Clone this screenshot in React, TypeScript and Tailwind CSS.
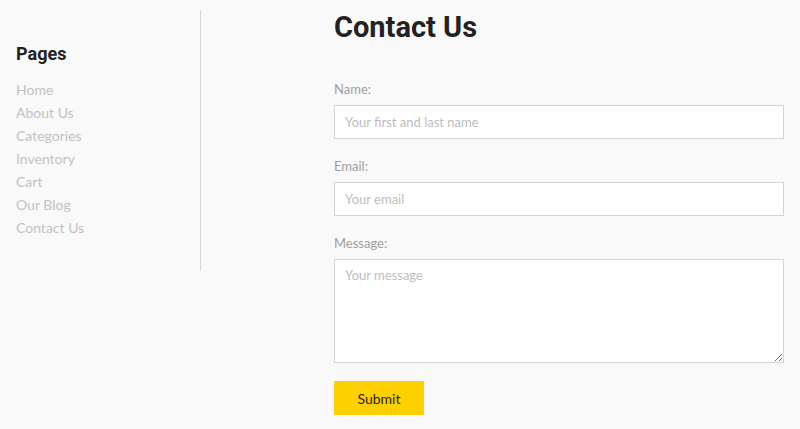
const navLinks = ["Home", "About Us", "Categories", "Inventory", "Cart", "Our Blog", "Contact Us"];

export default function App() {
  return (
    <div
      className="min-h-[429px] w-[800px] bg-[#f9f9f9] flex"
      style={{ fontFamily: "Lato, 'Liberation Sans', sans-serif" }}
    >
      {/* Sidebar */}
      <aside className="mt-[10px] h-[261px] w-[201px] border-r border-[#d6d6d6] pl-4 pt-[33px]">
        <h2 className="text-[18px] leading-[22px] font-bold text-[#222]" style={{ fontFamily: "Roboto, sans-serif" }}>
          Pages
        </h2>
        <ul className="mt-[13px]">
          {navLinks.map((l) => (
            <li key={l} className="text-[14px] leading-[23px] text-[#c2c2c2]">
              <a href="#">{l}</a>
            </li>
          ))}
        </ul>
      </aside>

      {/* Contact form */}
      <main className="ml-[133px] w-[450px] pt-[9px]">
        <h1 className="text-[29px] leading-[36px] font-bold text-[#222]" style={{ fontFamily: "Roboto, sans-serif" }}>
          Contact Us
        </h1>
        <form className="mt-[35px] flex flex-col">
          <label className="text-[13px] leading-[18px] text-[#9e9e9e]">Name:</label>
          <input
            placeholder="Your first and last name"
            className="mt-[7px] h-[34px] border border-[#d4d4d4] bg-white px-[10px] text-[13px] placeholder:text-[#bdbdbd] outline-none"
          />
          <label className="mt-[18px] text-[13px] leading-[18px] text-[#9e9e9e]">Email:</label>
          <input
            placeholder="Your email"
            className="mt-[7px] h-[34px] border border-[#d4d4d4] bg-white px-[10px] text-[13px] placeholder:text-[#bdbdbd] outline-none"
          />
          <label className="mt-[18px] text-[13px] leading-[18px] text-[#9e9e9e]">Message:</label>
          <textarea
            placeholder="Your message"
            className="mt-[7px] h-[104px] border border-[#d4d4d4] bg-white px-[10px] py-[6px] text-[13px] placeholder:text-[#bdbdbd] outline-none"
          />
          <button
            type="button"
            className="mt-[18px] h-[34px] w-[90px] bg-[#ffd000] text-[14px] text-[#222]"
          >
            Submit
          </button>
        </form>
      </main>
    </div>
  );
}
